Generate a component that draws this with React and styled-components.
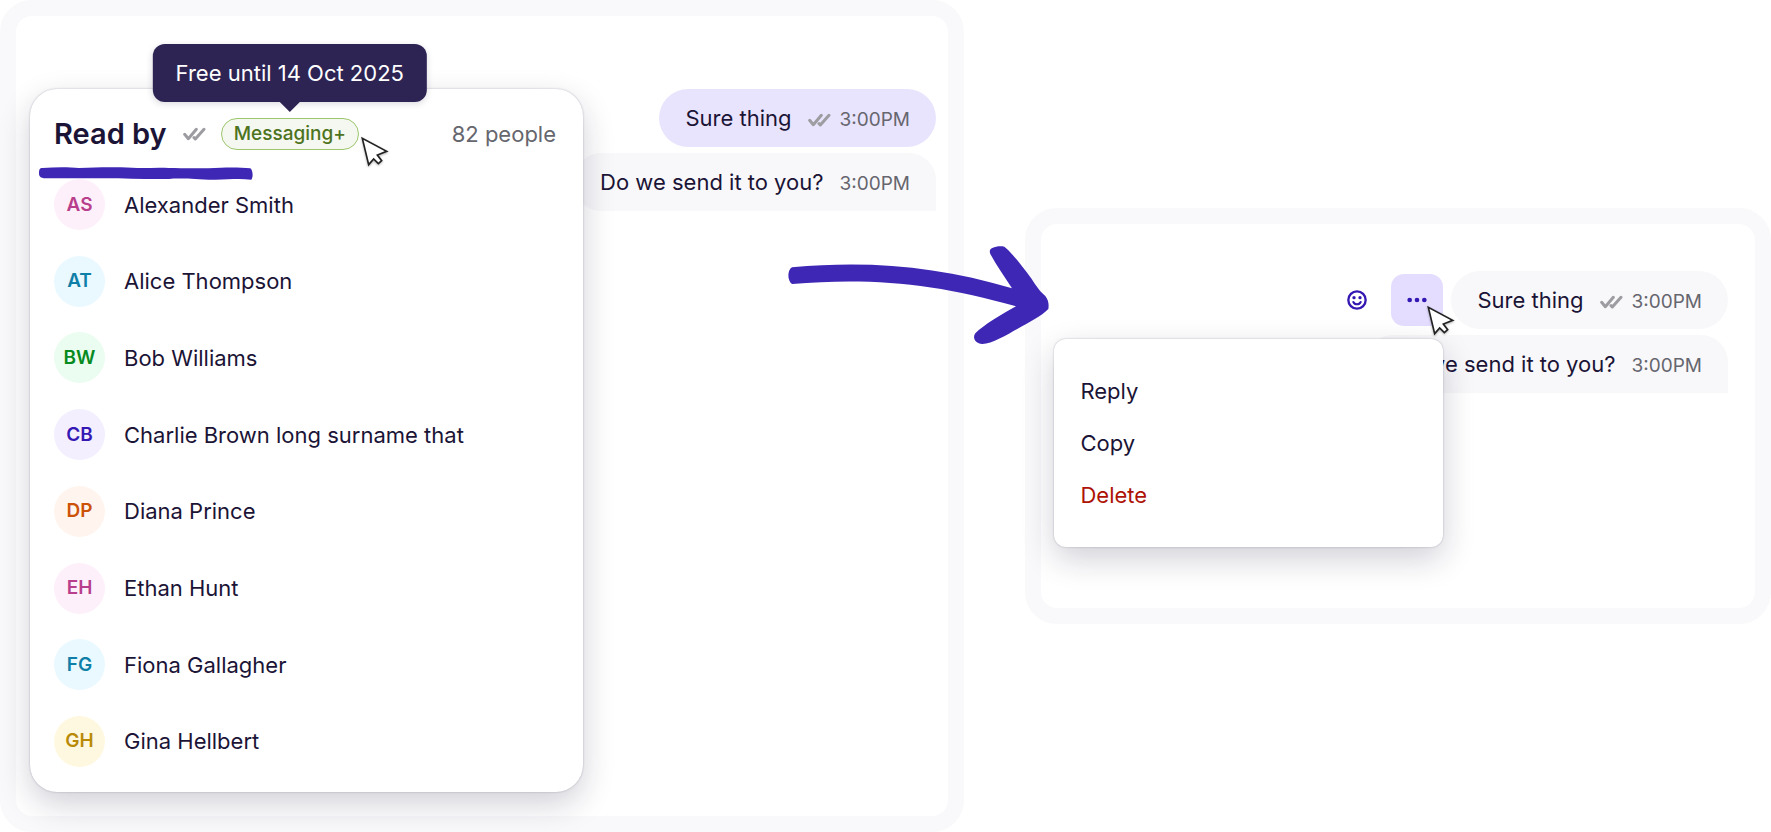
import React from "react";
import styled, { createGlobalStyle } from "styled-components";

const GlobalStyle = createGlobalStyle`
  *, *::before, *::after { box-sizing: border-box; }
  body {
    margin: 0;
    background: #ffffff;
    color: #1b1436;
    font-family: Inter, "Liberation Sans", sans-serif;
    font-size: 22px;
    line-height: 28px;
  }
  button { font: inherit; color: inherit; }
`;

const Page = styled.main`
  display: grid;
  grid-template-columns: minmax(0, 964fr) minmax(0, 746fr);
  column-gap: 61px;
  align-items: center;
  min-height: 100vh;
`;

const Panel = styled.section`
  position: relative;
  border: 16px solid #f9f9fb;
  border-radius: 32px;
  background: #ffffff;
`;

const ReceiptsPanel = styled(Panel)`
  display: grid;
  grid-template-columns: minmax(0, 553fr) minmax(0, 353fr);
  min-height: 100vh;
  padding: 73px 12px 24px 14px;
`;

const ActionsPanel = styled(Panel)`
  display: flex;
  justify-content: flex-end;
  align-items: flex-start;
  min-height: 50vh;
  padding: 47px 27px;
`;

const ReadByCard = styled.article`
  position: relative;
  z-index: 1;
  display: flex;
  flex-direction: column;
  padding: 24px 27px 25px 24px;
  border-radius: 27px;
  background: #ffffff;
  box-shadow: 0 0 2px rgba(27, 20, 54, 0.3), 0 12px 32px rgba(27, 20, 54, 0.2);
`;

const CardHeader = styled.header`
  display: flex;
  align-items: center;
  height: 42px;
`;

const Title = styled.h1`
  margin: 0 16px 0 0;
  font-size: 29px;
  line-height: 36px;
  font-weight: 600;
`;

const Count = styled.span`
  margin-left: auto;
  color: #66666e;
`;

const BadgeWrap = styled.div`
  position: relative;
  margin-left: 15px;
`;

const Badge = styled.span`
  display: block;
  padding: 0 12px;
  border: 1px solid #9cc66b;
  border-radius: 16px;
  background: #f5f8f0;
  color: #4d7320;
  font-size: 19px;
  line-height: 30px;
  font-weight: 500;
`;

const Tooltip = styled.div`
  position: absolute;
  left: 50%;
  bottom: calc(100% + 16px);
  transform: translateX(-50%);
  padding: 15px 23px;
  border-radius: 12px;
  background: #2d2454;
  color: #ffffff;
  white-space: nowrap;
  box-shadow: 0 2px 6px rgba(27, 20, 54, 0.15);

  &::after {
    content: "";
    position: absolute;
    top: 100%;
    left: 50%;
    margin-left: -10px;
    border: 10px solid transparent;
    border-bottom-width: 0;
    border-top-color: #2d2454;
  }
`;

const Underline = styled.svg`
  position: absolute;
  left: 9px;
  top: 78px;
  width: 214px;
  height: 13px;
`;

const People = styled.ul`
  flex: 1;
  display: flex;
  flex-direction: column;
  justify-content: space-between;
  margin: 24px 0 0;
  padding: 0;
  list-style: none;
`;

const Person = styled.li`
  display: flex;
  align-items: center;
  gap: 19px;
`;

const Avatar = styled.span`
  display: grid;
  place-items: center;
  width: 51px;
  height: 51px;
  border-radius: 50%;
  background: ${(p) => p.$bg};
  color: ${(p) => p.$fg};
  font-size: 19px;
  font-weight: 600;
`;

const Messages = styled.div`
  display: flex;
  flex-direction: column;
  align-items: flex-end;
  gap: 6px;
`;

const Bubble = styled.p`
  display: flex;
  align-items: center;
  margin: 0;
  padding: 15px 26px;
  border-radius: ${(p) => (p.$joined ? "27px 27px 0 27px" : "29px")};
  background: ${(p) => (p.$selected ? "#e9e4fd" : "#f8f8fa")};
  white-space: nowrap;
`;

const Meta = styled.span`
  display: flex;
  align-items: center;
  gap: 9px;
  margin-left: 16px;
  padding-top: 4px;
  color: #66666e;
  font-size: 19px;
  line-height: 24px;
`;

const MessageRow = styled.div`
  display: flex;
  align-items: center;
  gap: 8px;
`;

const IconButton = styled.button`
  display: grid;
  place-items: center;
  width: 52px;
  height: 52px;
  padding: 0;
  border: 0;
  border-radius: 13px;
  background: ${(p) => (p.$active ? "#e4ddff" : "transparent")};
  color: #3518b3;
  cursor: pointer;
`;

const MenuAnchor = styled.div`
  position: relative;
`;

const Menu = styled.div`
  position: absolute;
  z-index: 2;
  top: calc(100% + 13px);
  right: 0;
  display: flex;
  flex-direction: column;
  width: 389px;
  padding: 26px 0;
  border-radius: 12px;
  background: #ffffff;
  box-shadow: 0 0 2px rgba(27, 20, 54, 0.3), 0 12px 32px rgba(27, 20, 54, 0.2);
`;

const MenuItem = styled.button`
  padding: 12px 26px;
  border: 0;
  background: transparent;
  color: ${(p) => (p.$danger ? "#ad1205" : "inherit")};
  text-align: left;
  cursor: pointer;
`;

const Pointer = styled.svg`
  position: absolute;
  z-index: 3;
  left: ${(p) => p.$left};
  top: ${(p) => p.$top};
  width: 28px;
  height: 30px;
  overflow: visible;
  filter: drop-shadow(0 1px 1px rgba(0, 0, 0, 0.3));
`;

const FlowArrow = styled.svg`
  position: absolute;
  z-index: 4;
  left: -253px;
  top: 22px;
  width: 261px;
  height: 98px;
`;

const DoubleCheck = () => (
  <svg width="23" height="14" viewBox="0 0 69 42" fill="none" stroke="#9c9ca1" strokeWidth="9" strokeLinecap="round" strokeLinejoin="round" role="img" aria-label="Read">
    <path d="M5 22L16 35L40 7" />
    <path d="M33 32L37 36L63 7" />
  </svg>
);

const Cursor = ({ left, top }) => (
  <Pointer $left={left} $top={top} viewBox="0 0 84 90" aria-hidden="true">
    <path d="M4 4L23 83L38 66L52 80L62 71L49 54L77 43Z" fill="#fff" stroke="#222" strokeWidth="5" strokeLinejoin="miter" />
  </Pointer>
);

const people = [
  { name: "Alexander Smith", initials: "AS", bg: "#fef0fa", fg: "#b83f8c" },
  { name: "Alice Thompson", initials: "AT", bg: "#eaf9ff", fg: "#0f7fa8" },
  { name: "Bob Williams", initials: "BW", bg: "#ebfdf0", fg: "#078a1e" },
  { name: "Charlie Brown long surname that", initials: "CB", bg: "#f3efff", fg: "#3518b3" },
  { name: "Diana Prince", initials: "DP", bg: "#fff5ee", fg: "#cc5208" },
  { name: "Ethan Hunt", initials: "EH", bg: "#fef0fa", fg: "#b83f8c" },
  { name: "Fiona Gallagher", initials: "FG", bg: "#eaf9ff", fg: "#0f7fa8" },
  { name: "Gina Hellbert", initials: "GH", bg: "#fff8e0", fg: "#b98a08" },
];

const Message = ({ text, read, selected, joined }) => (
  <Bubble $selected={selected} $joined={joined}>
    <span>{text}</span>
    <Meta>
      {read && <DoubleCheck />}
      <time dateTime="15:00">3:00PM</time>
    </Meta>
  </Bubble>
);

export default function App() {
  return (
    <>
      <GlobalStyle />
      <Page>
        <ReceiptsPanel>
          <ReadByCard>
            <CardHeader>
              <Title>Read by</Title>
              <DoubleCheck />
              <BadgeWrap>
                <Badge>Messaging+</Badge>
                <Tooltip role="tooltip">Free until 14 Oct 2025</Tooltip>
                <Cursor left="calc(100% + 2px)" top="19px" />
              </BadgeWrap>
              <Count>82 people</Count>
            </CardHeader>
            <People>
              {people.map((p) => (
                <Person key={p.name}>
                  <Avatar $bg={p.bg} $fg={p.fg}>{p.initials}</Avatar>
                  {p.name}
                </Person>
              ))}
            </People>
            <Underline viewBox="0 0 642 39" aria-hidden="true">
              <path d="M0 18C0 7 3 3 10 3C50 0 90 0 120 3C180 0 230 0 280 2C320 5 350 0 390 3C430 4 500 5 545 2C585 0 610 2 634 4C642 10 643 30 637 38C590 33 560 40 510 38C450 36 420 33 390 36C310 37 240 33 180 34C110 33 60 34 20 34C3 33 0 28 0 18Z" fill="#3f27b5" />
            </Underline>
          </ReadByCard>
          <Messages>
            <Message text="Sure thing" read selected />
            <Message text="Do we send it to you?" joined />
          </Messages>
        </ReceiptsPanel>

        <ActionsPanel>
          <Messages>
            <MessageRow>
              <IconButton type="button" aria-label="Add reaction">
                <svg width="20" height="20" viewBox="0 0 60 60" fill="none" stroke="currentColor" strokeLinecap="round">
                  <circle cx="30" cy="30" r="26" strokeWidth="7" />
                  <circle cx="21" cy="23" r="5" fill="currentColor" stroke="none" />
                  <circle cx="39" cy="23" r="5" fill="currentColor" stroke="none" />
                  <path d="M19 36C23 45 37 45 41 36" strokeWidth="6" />
                </svg>
              </IconButton>
              <MenuAnchor>
                <IconButton type="button" $active aria-label="More actions" aria-expanded="true">
                  <svg width="20" height="6" viewBox="0 0 60 18" fill="currentColor">
                    <circle cx="8" cy="9" r="7" />
                    <circle cx="30" cy="9" r="7" />
                    <circle cx="52" cy="9" r="7" />
                  </svg>
                </IconButton>
                <Menu role="menu">
                  <MenuItem type="button" role="menuitem">Reply</MenuItem>
                  <MenuItem type="button" role="menuitem">Copy</MenuItem>
                  <MenuItem type="button" role="menuitem" $danger>Delete</MenuItem>
                </Menu>
                <Cursor left="36px" top="32px" />
              </MenuAnchor>
              <Message text="Sure thing" read />
            </MessageRow>
            <Message text="Do we send it to you?" joined />
          </Messages>
          <FlowArrow viewBox="55 78 783 294" aria-hidden="true">
            <path d="M67 142C300 120 510 140 727 205C705 170 681 138 662 102C658 92 662 86 668 84C679 79 692 77 704 80C720 91 763 144 780 169C796 190 804 209 827 228C837 241 838 254 836 267C817 288 774 309 744 326C712 344 666 371 638 372C617 371 607 353 617 340C641 316 698 281 739 259C500 190 300 172 67 192C52 182 53 150 67 142Z" fill="#3f27b5" />
          </FlowArrow>
        </ActionsPanel>
      </Page>
    </>
  );
}
